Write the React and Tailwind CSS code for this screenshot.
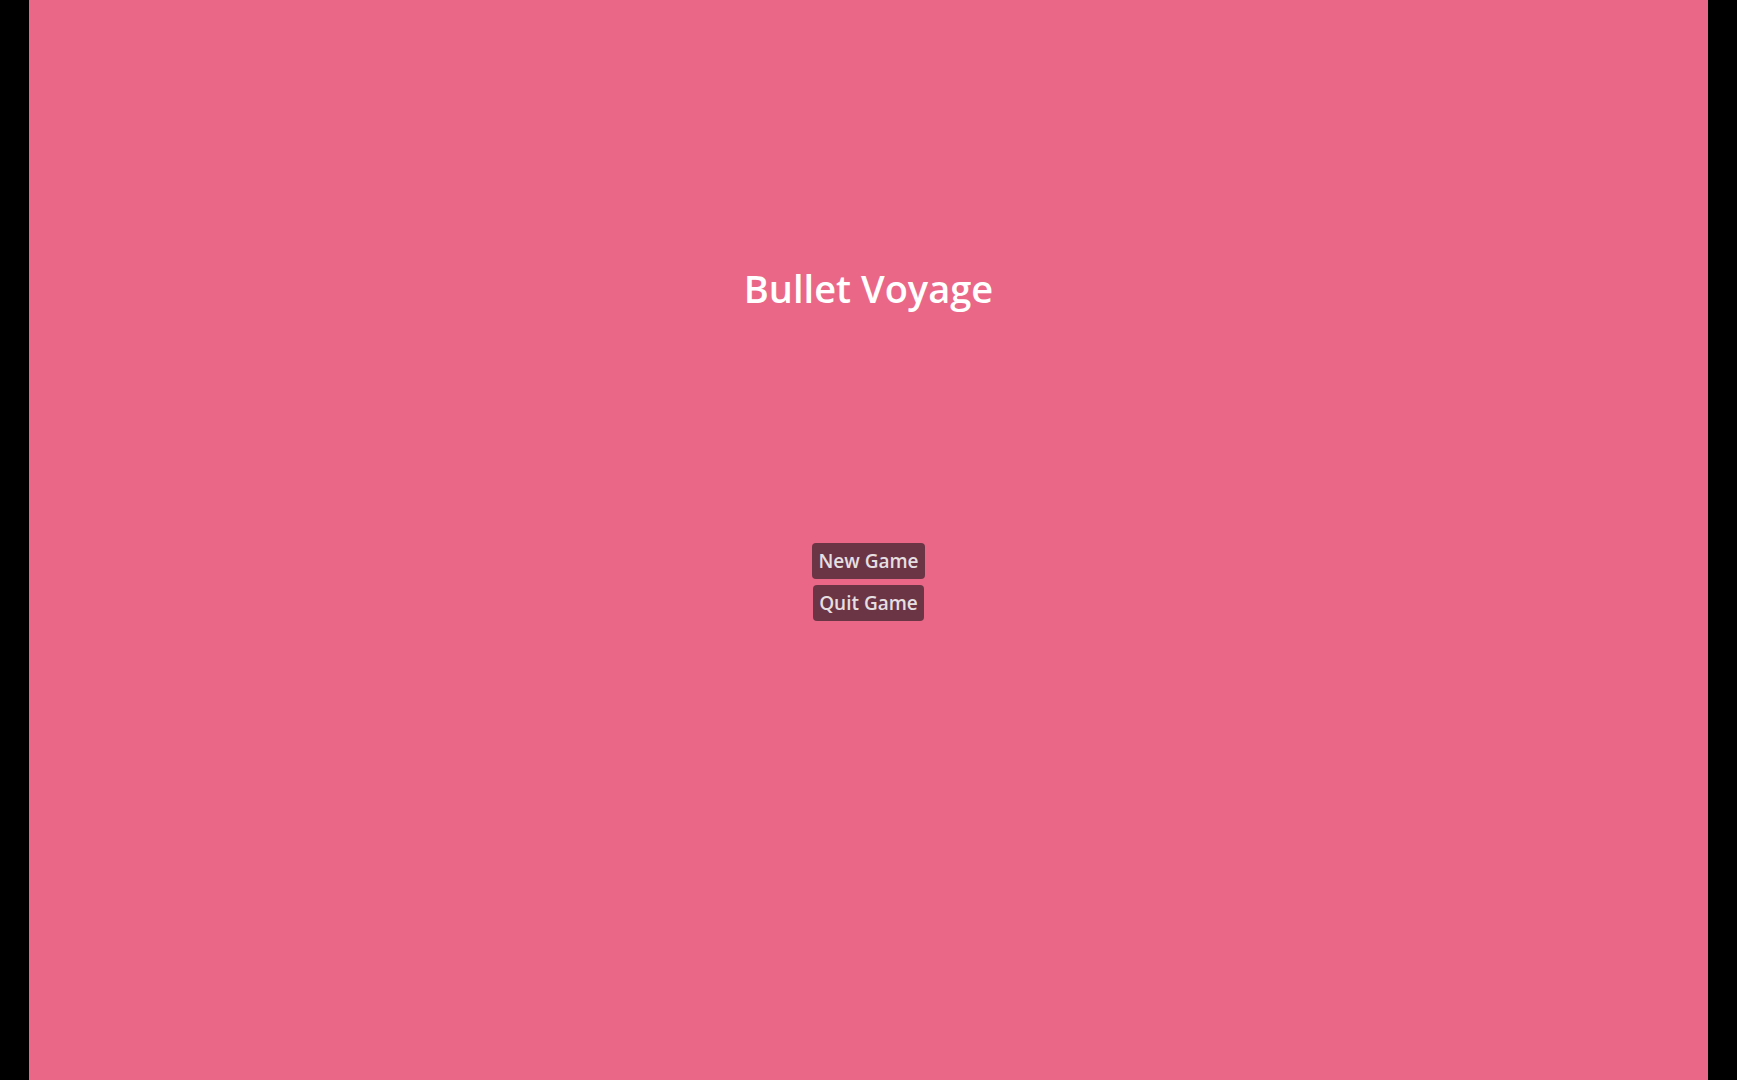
import React from 'react';

const MenuButton = ({ label }) => (
  <button
    type="button"
    className="rounded bg-[#6b3546] px-[6px] py-1 text-[19px] font-semibold leading-7 text-[#e6dfe0]"
  >
    {label}
  </button>
);

const App = () => {
  return (
    <div className="flex h-screen w-full bg-black" style={{ fontFamily: '"Open Sans", sans-serif' }}>
      <div className="ml-[29px] flex h-full w-[1679px] flex-col items-center bg-[#ea6787]">
        <h1 className="mt-[262px] text-[38px] font-semibold leading-[52px] text-white">Bullet Voyage</h1>
        <div className="mt-[229px] flex flex-col items-center gap-[6px]">
          <MenuButton label="New Game" />
          <MenuButton label="Quit Game" />
        </div>
      </div>
    </div>
  );
};

export default App;
